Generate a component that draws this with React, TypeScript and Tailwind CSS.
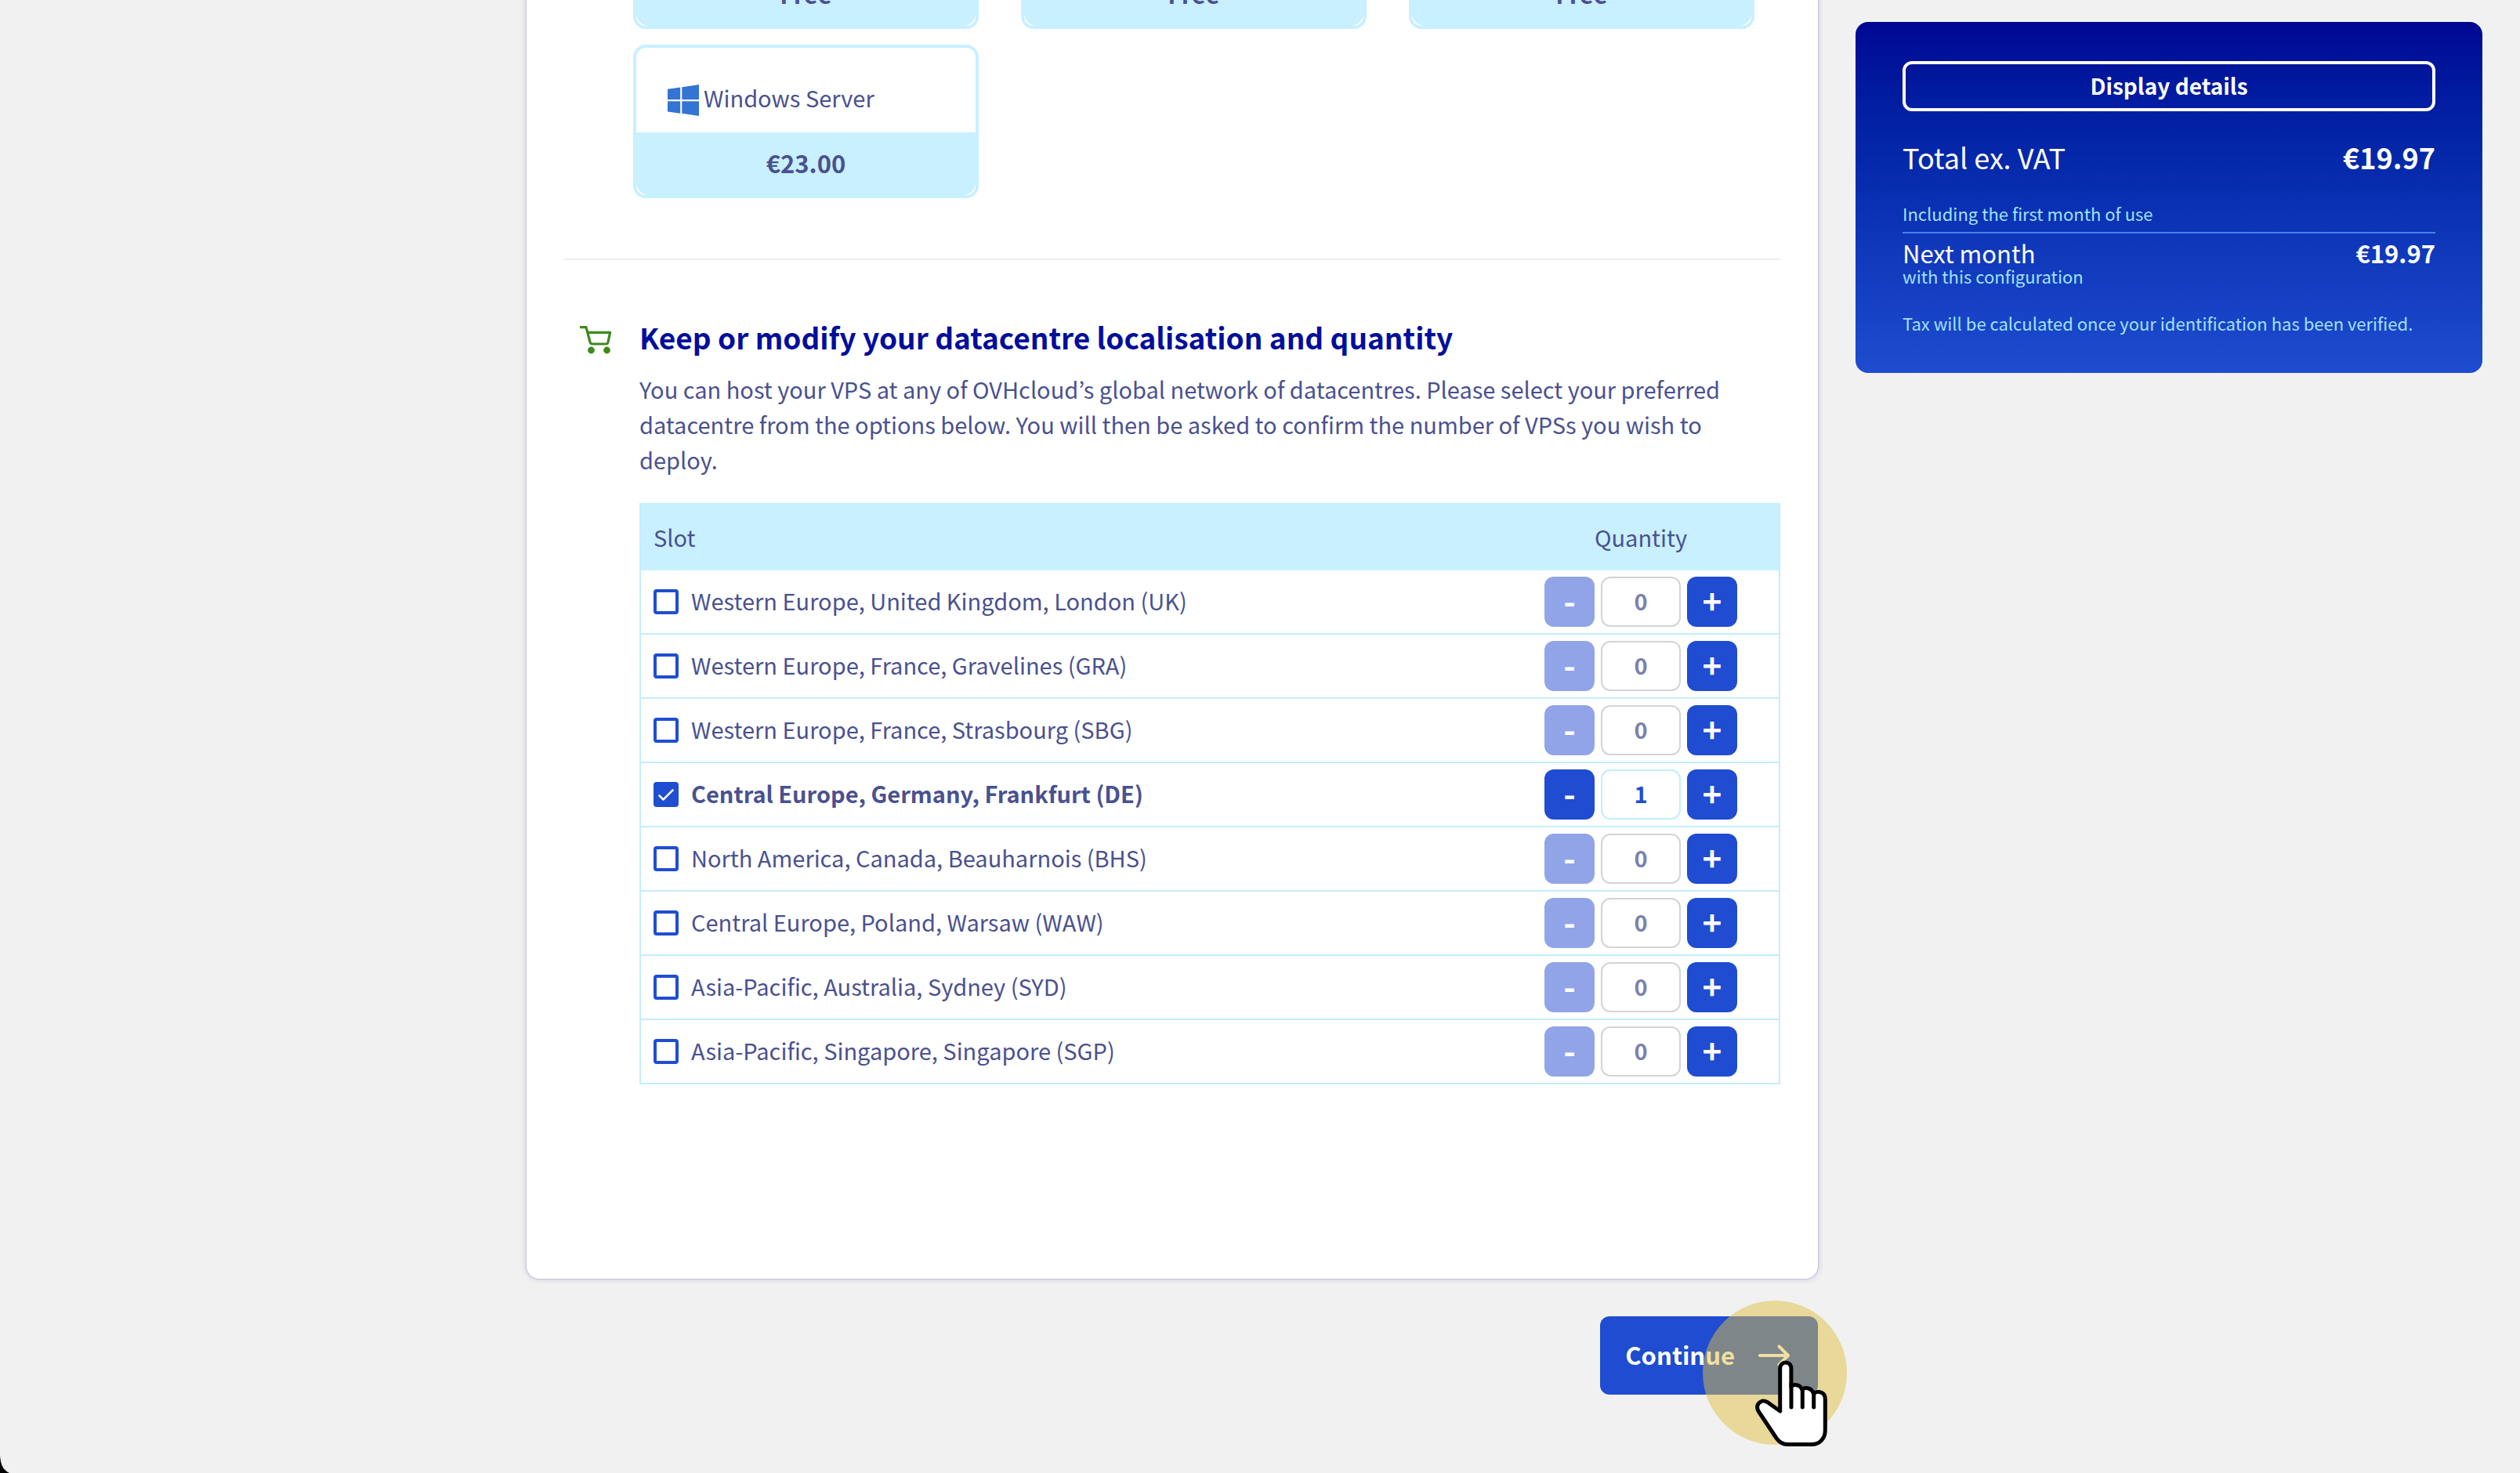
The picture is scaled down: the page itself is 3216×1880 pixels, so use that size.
import { useState } from "react";

const SLOTS = [
  { code: "UK", name: "Western Europe, United Kingdom, London (UK)", quantity: 0 },
  { code: "GRA", name: "Western Europe, France, Gravelines (GRA)", quantity: 0 },
  { code: "SBG", name: "Western Europe, France, Strasbourg (SBG)", quantity: 0 },
  { code: "DE", name: "Central Europe, Germany, Frankfurt (DE)", quantity: 1 },
  { code: "BHS", name: "North America, Canada, Beauharnois (BHS)", quantity: 0 },
  { code: "WAW", name: "Central Europe, Poland, Warsaw (WAW)", quantity: 0 },
  { code: "SYD", name: "Asia-Pacific, Australia, Sydney (SYD)", quantity: 0 },
  { code: "SGP", name: "Asia-Pacific, Singapore, Singapore (SGP)", quantity: 0 },
];

function WindowsLogo() {
  return (
    <svg viewBox="0 0 40 40" className="size-10 shrink-0" fill="#3474d2" aria-hidden="true">
      <path d="M0 5.8 16.2 3.6V19H0zM18.3 3.3 40 0v19H18.3zM0 21.3h16.2v15.4L0 34.4zM18.3 21.3H40V40l-21.7-3.2z" />
    </svg>
  );
}

function CartIcon() {
  return (
    <svg viewBox="0 -4 42 40" className="h-10 w-[42px] shrink-0" fill="none" aria-hidden="true">
      <path
        d="M0 1.7h8L13 20.500Q13.600 23 16 23h17.500Q35.500 23 36 20.500L38.600 8.300H10"
        stroke="#3d8a1c"
        strokeWidth="3.2"
        strokeLinejoin="round"
      />
      <circle cx="14.5" cy="31" r="4.4" fill="#3d8a1c" />
      <circle cx="34.5" cy="31" r="4.4" fill="#3d8a1c" />
    </svg>
  );
}

function ArrowIcon() {
  return (
    <svg
      viewBox="0 0 40 28"
      className="h-7 w-10 shrink-0"
      fill="none"
      stroke="white"
      strokeWidth="4"
      strokeLinecap="round"
      strokeLinejoin="round"
      aria-hidden="true"
    >
      <path d="M2 14h36M26.500 2.500 38 14 26.500 25.500" />
    </svg>
  );
}

function PointerHand() {
  return (
    <svg viewBox="0 0 92 110" className="absolute top-[76px] left-[67px] h-[110px] w-[92px]" aria-hidden="true">
      <path
        d="M31.700 65V10a7.100 7.100 0 0 1 14.200 0V34C48 31 57 29.500 60 38 62 34.500 71.500 34 74.700 43 78 38.500 89.300 39.500 89.300 49.500V89.500C89.300 100 82 107.500 72 107.500H41C35 107.500 31 105 27 99.500L4 65C-.5 56 8 48.500 16.500 54.200z"
        fill="white"
        stroke="black"
        strokeWidth="5"
        strokeLinejoin="round"
      />
      <path d="M46 30v30M60.300 37v23M74.700 42v18" fill="none" stroke="black" strokeWidth="5" strokeLinecap="round" />
    </svg>
  );
}

function PriceBand({ children }: { children: string }) {
  return (
    <div className="flex h-20 items-center justify-center rounded-b-2xl bg-[#c8f0ff] pb-1 text-[31px] font-bold">
      {children}
    </div>
  );
}

function SlotRow({ code, name, initial }: { code: string; name: string; initial: number }) {
  const [quantity, setQuantity] = useState(initial);
  const selected = quantity > 0;
  const id = `slot-${code}`;
  return (
    <tr className="h-[82px]">
      <td className="border-b-2 border-[#c2eeff] pl-4">
        <div className="flex items-center gap-4">
          <span className="relative flex size-8">
            <input
              id={id}
              type="checkbox"
              checked={selected}
              onChange={(e) => setQuantity(e.target.checked ? 1 : 0)}
              className="size-8 appearance-none rounded-[4px] border-4 border-[#1f4ed2] bg-white checked:bg-[#1f4ed2]"
            />
            {selected && (
              <svg
                viewBox="0 0 32 32"
                className="pointer-events-none absolute inset-0 size-8"
                fill="none"
                stroke="white"
                strokeWidth="2.500"
                strokeLinecap="round"
                strokeLinejoin="round"
                aria-hidden="true"
              >
                <path d="M7.500 17.500 12.500 22.500 24.500 10.500" />
              </svg>
            )}
          </span>
          <label htmlFor={id} className={selected ? "pb-1 font-bold" : "pb-1"}>
            {name}
          </label>
        </div>
      </td>
      <td className="w-[352px] border-b-2 border-[#c2eeff]">
        <div className="flex items-center justify-center gap-2">
          <button
            type="button"
            aria-label={`Remove one from ${name}`}
            disabled={!selected}
            onClick={() => setQuantity(quantity - 1)}
            className="flex size-16 items-center justify-center rounded-xl bg-[#1f4cd0] pb-1.5 text-[42px] font-bold text-white disabled:bg-[#91a4e8]"
          >
            -
          </button>
          <input
            type="text"
            inputMode="numeric"
            aria-label={`Quantity for ${name}`}
            value={quantity}
            onChange={(e) => setQuantity(Number(e.target.value) || 0)}
            className={
              selected
                ? "h-16 w-[102px] rounded-xl border-2 border-[#c2eeff] bg-white pb-1 text-center font-bold text-[#1f4ed2]"
                : "h-16 w-[102px] rounded-xl border-2 border-[#d4d4d4] bg-white pb-1 text-center font-bold text-[#7b82ae]"
            }
          />
          <button
            type="button"
            aria-label={`Add one to ${name}`}
            onClick={() => setQuantity(quantity + 1)}
            className="flex size-16 items-center justify-center rounded-xl bg-[#1f4cd0] pb-1.5 text-[42px] font-bold text-white"
          >
            +
          </button>
        </div>
      </td>
    </tr>
  );
}

export default function App() {
  return (
    <div className="relative flex min-h-screen items-start gap-12 overflow-hidden bg-[#f1f1f1] pr-12 pl-[672px] font-['Noto_Sans_CJK_KR',sans-serif] text-[29px] leading-[45px] text-[#4a5190]">
      <main className="min-w-0 flex-1">
        <div className="rounded-b-2xl bg-white px-12 pb-[248px] shadow-[0_0_2px_rgba(0,0,140,0.35),0_0_8px_rgba(0,0,140,0.2)]">
          <div className="-mt-[47px] grid grid-cols-3 gap-x-[54px] gap-y-5 pr-[33px] pl-[88px]">
            {["first", "second", "third"].map((key) => (
              <div key={key} className="rounded-b-2xl border-4 border-t-0 border-[#c8f0ff] bg-white">
                <PriceBand>Free</PriceBand>
              </div>
            ))}
            <div className="rounded-2xl border-4 border-[#c8f0ff] bg-white">
              <div className="flex h-[108px] items-center gap-1.5 pt-[26px] pl-10">
                <WindowsLogo />
                <span className="pb-2">Windows Server</span>
              </div>
              <PriceBand>€23.00</PriceBand>
            </div>
          </div>

          <hr className="mt-[77px] border-t-2 border-[#eeeeee]" />

          <section className="pt-[72px] pl-5">
            <div className="flex items-center gap-[34px]">
              <CartIcon />
              <h2 className="pb-1 text-[37px] leading-[52px] font-bold text-[#000e9c]">
                Keep or modify your datacentre localisation and quantity
              </h2>
            </div>
            <div className="pl-[76px]">
              <p className="pt-3.5">
                You can host your VPS at any of OVHcloud’s global network of datacentres. Please select your preferred
                datacentre from the options below. You will then be asked to confirm the number of VPSs you wish to
                deploy.
              </p>
              <table className="mt-[33px] w-full border-separate border-spacing-0 border-x-2 border-[#c2eeff]">
                <thead>
                  <tr className="h-[86px] bg-[#c8f0ff]">
                    <th className="pl-4 text-left font-normal">Slot</th>
                    <th className="font-normal">Quantity</th>
                  </tr>
                </thead>
                <tbody>
                  {SLOTS.map((s) => (
                    <SlotRow key={s.code} code={s.code} name={s.name} initial={s.quantity} />
                  ))}
                </tbody>
              </table>
            </div>
          </section>
        </div>

        <div className="mt-12 flex justify-end">
          <div className="relative">
            <button
              type="button"
              className="flex h-[100px] items-center gap-[30px] rounded-xl bg-[#1f4cd0] pr-9 pl-8 text-[31px] font-bold text-white"
            >
              <span className="pb-1">Continue</span>
              <ArrowIcon />
            </button>
            <div className="pointer-events-none absolute -top-5 -right-[37px] size-[184px] rounded-full bg-[#e0bf41]/50">
              <PointerHand />
            </div>
          </div>
        </div>
      </main>

      <aside className="mt-7 w-[800px] shrink-0 rounded-2xl bg-linear-to-b from-[#000793] to-[#1f4cd0] px-[60px] pt-[50px] pb-[52px] text-white">
        <button type="button" className="h-16 w-full rounded-xl border-4 border-white pb-0.5 text-[28px] font-bold">
          Display details
        </button>
        <div className="flex items-center justify-between pt-8 text-[36px] leading-[52px]">
          <span>Total ex. VAT</span>
          <span className="font-bold">€19.97</span>
        </div>
        <p className="border-b-2 border-[#4385e8] pt-7 pb-1.5 text-[22px] leading-9 text-[#a2e1fd]">
          Including the first month of use
        </p>
        <div className="flex items-center justify-between pt-2 text-[31px] leading-[34px]">
          <span>Next month</span>
          <span className="font-bold">€19.97</span>
        </div>
        <p className="text-[22px] leading-6 text-[#a2e1fd]">with this configuration</p>
        <p className="pt-9 text-[22px] leading-6 text-[#a2e1fd]">
          Tax will be calculated once your identification has been verified.
        </p>
      </aside>

      <svg viewBox="0 0 12 22" className="absolute bottom-0 left-0 h-[22px] w-3" aria-hidden="true">
        <path d="M0 0C1 12 4 18 12 22H0z" fill="black" />
      </svg>
    </div>
  );
}
